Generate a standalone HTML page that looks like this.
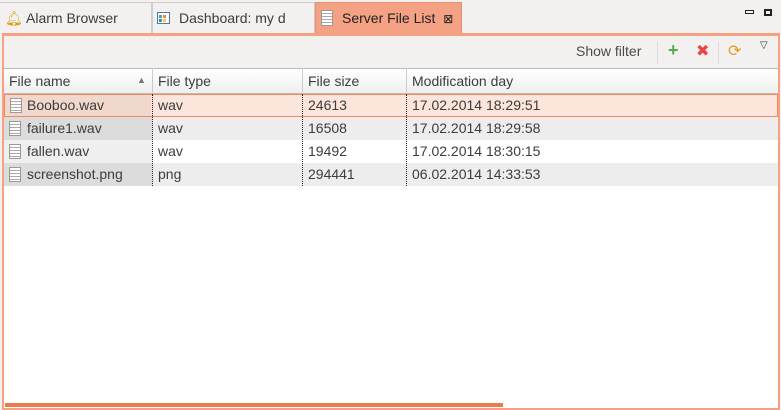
<!DOCTYPE html>
<html><head><style>
*{margin:0;padding:0;box-sizing:border-box}
body{width:781px;height:410px;background:#f2f1f0;font-family:"Liberation Sans","DejaVu Sans",sans-serif;font-size:14px;color:#3c3c3c;position:relative;overflow:hidden}
.tab{position:absolute;top:2px;height:31px;line-height:31px;border:1px solid #cfcdca;border-bottom:none;background:#f2f1f0;padding-left:26px}
.panel{position:absolute;left:2px;top:33px;width:778px;height:377px;border:2px solid #f4a283;border-top:3px solid #f4a283;background:#fff}
.tb{position:absolute;left:0;top:0;width:774px;height:32px;background:#f2f1f0}
.hdr{position:absolute;left:0;top:32px;width:774px;height:26px;background:linear-gradient(#fff,#f0efee);border-top:1px solid #bbb;border-bottom:1px solid #bbb}
.hdr span{position:absolute;top:4px}
.vl{position:absolute;top:32px;width:1px;height:26px;background:#ccc}
.row{position:absolute;left:0;width:774px;height:23px;line-height:23px}
.row span{position:absolute;top:0}
.dl{position:absolute;width:0;border-left:1px dotted #222}
.ic{position:absolute;left:5px;top:4px;width:12px;height:15px;border:1px solid #999;background:repeating-linear-gradient(#fff 0 2px,#aaa 2px 3px);}
</style></head><body>
<div class="tab" style="left:0;width:152px;border-left:none"><span style="position:absolute;left:5px;top:0;color:#d9a020">🔔︎</span>Alarm Browser</div>
<div class="tab" style="left:152px;width:163px"><svg style="position:absolute;left:4px;top:9px" width="13" height="12"><rect x=".5" y=".5" width="12" height="11" fill="#fff" stroke="#4a78b0"/><rect x="2" y="3" width="3" height="3" fill="#4a8"/><rect x="6" y="3" width="3" height="3" fill="#e84"/><rect x="2" y="7" width="3" height="3" fill="#48c"/><rect x="6" y="7" width="3" height="3" fill="#ec4"/></svg>Dashboard: my d</div>
<div class="tab" style="left:315px;width:147px;background:#f4a283;border-color:#e89070;color:#222"><span class="ic" style="left:5px;top:7px;height:16px"></span>Server File List <span style="font-size:12px;margin-left:4px">⊠</span></div>
<div style="position:absolute;left:745px;top:10px;width:9px;height:4px;border:1px solid #222"></div>
<div style="position:absolute;left:764px;top:9px;width:8px;height:7px;border:2px solid #222"></div>
<div class="panel">
<div class="tb">
<span style="position:absolute;left:572px;top:7px;color:#4a4a4a">Show filter</span>
<div style="position:absolute;left:653px;top:6px;width:1px;height:22px;background:#ddd"></div>
<span style="position:absolute;left:664px;top:4px;color:#5a5;font-weight:bold;font-size:18px">+</span>
<span style="position:absolute;left:692px;top:5px;color:#e44;font-weight:bold;font-size:16px">✖</span>
<div style="position:absolute;left:714px;top:6px;width:1px;height:22px;background:#ddd"></div>
<span style="position:absolute;left:724px;top:5px;color:#e0a020;font-size:16px">⟳</span>
<span style="position:absolute;left:756px;top:4px;font-size:10px">▽</span>
</div>
<div class="hdr"><span style="left:5px">File name</span><span style="left:133px;top:6px;font-size:9px;color:#777">▲</span><span style="left:154px">File type</span><span style="left:304px">File size</span><span style="left:408px">Modification day</span></div>
<div class="vl" style="left:148px"></div><div class="vl" style="left:298px"></div><div class="vl" style="left:402px"></div>
<div class="row" style="top:58px;background:#fce5da;border:1px solid #f08a60"><div style="position:absolute;left:0;top:0;width:146px;height:21px;background:#f1d8cc"></div><div class="ic" style="top:3px"></div><span style="left:22px;top:-1px">Booboo.wav</span><span style="left:153px;top:-1px">wav</span><span style="left:303px;top:-1px">24613</span><span style="left:407px;top:-1px">17.02.2014 18:29:51</span></div>
<div class="row" style="top:81px;background:#ededed"><div style="position:absolute;left:0;top:0;width:148px;height:23px;background:#dcdcdc"></div><div class="ic"></div><span style="left:23px">failure1.wav</span><span style="left:154px">wav</span><span style="left:304px">16508</span><span style="left:408px">17.02.2014 18:29:58</span></div>
<div class="row" style="top:104px;background:#fff"><div style="position:absolute;left:0;top:0;width:148px;height:23px;background:#efefef"></div><div class="ic"></div><span style="left:23px">fallen.wav</span><span style="left:154px">wav</span><span style="left:304px">19492</span><span style="left:408px">17.02.2014 18:30:15</span></div>
<div class="row" style="top:127px;background:#ededed"><div style="position:absolute;left:0;top:0;width:148px;height:23px;background:#dcdcdc"></div><div class="ic"></div><span style="left:23px">screenshot.png</span><span style="left:154px">png</span><span style="left:304px">294441</span><span style="left:408px">06.02.2014 14:33:53</span></div>
<div class="dl" style="left:148px;top:58px;height:92px"></div><div class="dl" style="left:298px;top:58px;height:92px"></div><div class="dl" style="left:402px;top:58px;height:92px"></div>
<div style="position:absolute;left:1px;top:367px;width:498px;height:4px;background:#ec7a4a"></div>
</div>
</body></html>
